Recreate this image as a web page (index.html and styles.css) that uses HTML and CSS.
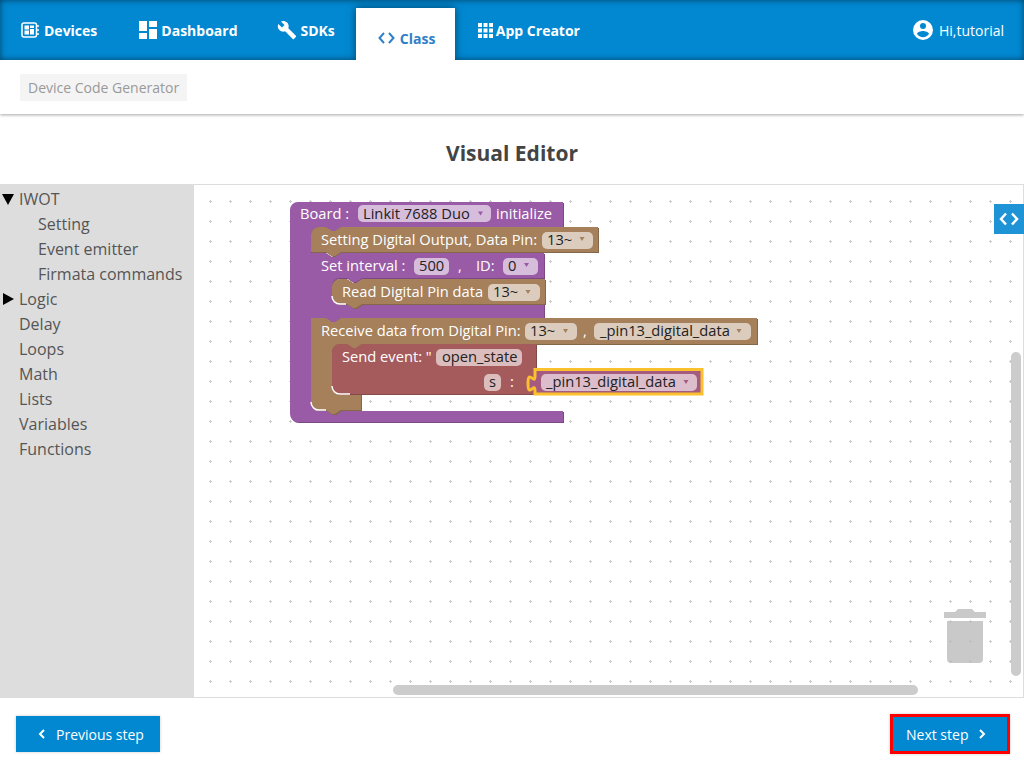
FILE: index.html
```html
<!DOCTYPE html>
<html>
	<head>
		<meta charset="UTF-8">
		<title>Visual Editor</title>
		<link rel="stylesheet" href="styles.css">
	</head>
	<body>
		<nav class="topnav">
			<a class="nav-item nav-devices" href="#">
				<svg class="nav-icon" width="18" height="18" viewBox="0 0 18 18">
					<rect x="1" y="2" width="14.500" height="14" rx="2" class="ic-line"/>
					<rect x="3.500" y="4.500" width="4.500" height="4" class="ic-fill"/>
					<rect x="3.500" y="9.500" width="4.500" height="4" class="ic-fill"/>
					<rect x="9" y="4.500" width="4" height="2.500" class="ic-fill"/>
					<rect x="9" y="8" width="4" height="5.500" class="ic-fill"/>
					<path d="M16,5h2M16,9h2M16,13h2" class="ic-line"/>
				</svg>
				Devices
			</a>
			<a class="nav-item nav-dashboard" href="#">
				<svg class="nav-icon" width="18" height="18" viewBox="0 0 18 18">
					<path d="M0,0H8V10H0ZM10,0H18V6H10ZM10,8H18V18H10ZM0,12H8V18H0Z" class="ic-fill"/>
				</svg>
				Dashboard
			</a>
			<a class="nav-item nav-sdks" href="#">
				<svg class="nav-icon" width="20" height="20" viewBox="0 0 24 24">
					<path d="M22.7,19L13.6,9.9C14.5,7.6 14,4.9 12.1,3C10.1,1 7.1,0.6 4.7,1.7L9,6L6,9L1.6,4.7C0.4,7.1 0.9,10.1 2.9,12.1C4.8,14 7.5,14.5 9.8,13.6L18.9,22.7C19.3,23.1 19.9,23.1 20.3,22.7L22.6,20.4C23.1,20 23.1,19.3 22.7,19Z" class="ic-fill"/>
				</svg>
				SDKs
			</a>
			<a class="nav-item nav-class" href="#">
				<svg class="nav-icon" width="17" height="12" viewBox="0 0 17 12">
					<path d="M6,1L1.500,6L6,11M11,1L15.500,6L11,11" class="ic-code"/>
				</svg>
				Class
			</a>
			<a class="nav-item nav-creator" href="#">
				<svg class="nav-icon" width="15" height="15" viewBox="0 0 15 15">
					<path d="M0,0h4v4h-4zM5.500,0h4v4h-4zM11,0h4v4h-4zM0,5.500h4v4h-4zM5.500,5.500h4v4h-4zM11,5.500h4v4h-4zM0,11h4v4h-4zM5.500,11h4v4h-4zM11,11h4v4h-4z" class="ic-fill"/>
				</svg>
				App Creator
			</a>
			<a class="nav-user" href="#">
				<svg class="nav-icon" width="24" height="24" viewBox="0 0 24 24">
					<path d="M12,19.2C9.5,19.2 7.29,17.92 6,16C6.03,14 10,12.9 12,12.9C14,12.9 17.97,14 18,16C16.71,17.92 14.5,19.2 12,19.2M12,5A3,3 0 0,1 15,8A3,3 0 0,1 12,11A3,3 0 0,1 9,8A3,3 0 0,1 12,5M12,2A10,10 0 0,0 2,12A10,10 0 0,0 12,22A10,10 0 0,0 22,12A10,10 0 0,0 12,2Z" class="ic-fill"/>
				</svg>
				Hi,tutorial
			</a>
		</nav>

		<div class="subbar">
			<span class="chip">Device Code Generator</span>
		</div>

		<h1 class="title">Visual Editor</h1>

		<div class="editor">
			<ul class="toolbox">
				<li class="cat"><i class="tri-down"></i>IWOT</li>
				<li class="sub">Setting</li>
				<li class="sub">Event emitter</li>
				<li class="sub">Firmata commands</li>
				<li class="cat"><i class="tri-right"></i>Logic</li>
				<li class="cat">Delay</li>
				<li class="cat">Loops</li>
				<li class="cat">Math</li>
				<li class="cat">Lists</li>
				<li class="cat">Variables</li>
				<li class="cat">Functions</li>
			</ul>
			<div class="workspace">
				<svg class="canvas" viewBox="194 185 829 512">
					<defs>
						<pattern id="dots" x="0" y="0" width="20" height="20" patternUnits="userSpaceOnUse">
							<rect x="9" y="1" width="3" height="1" fill="#ccc"/>
							<rect x="10" y="0" width="1" height="3" fill="#ccc"/>
						</pattern>
					</defs>
					<rect x="194" y="185" width="829" height="512" fill="url(#dots)"/>

					<!-- board -->
					<path class="dark-purple" transform="translate(1,1)" d="M290,210a8,8 0 0 1 8,-8H563V227H341l-6,4 -3,0 -6,-4H319a8,8 0 0 0 -8,8V403a8,8 0 0 0 8,8H563V422H298a8,8 0 0 1 -8,-8z"/>
					<path class="purple" d="M290,210a8,8 0 0 1 8,-8H563V227H341l-6,4 -3,0 -6,-4H319a8,8 0 0 0 -8,8V403a8,8 0 0 0 8,8H563V422H298a8,8 0 0 1 -8,-8z"/>
					<!-- setting digital output -->
					<path class="dark-brown" transform="translate(1,1)" d="M311,235a8,8 0 0 1 8,-8H326l6,4 3,0 6,-4H598V252H341l-6,4 -3,0 -6,-4H311z"/>
					<path class="brown" d="M311,235a8,8 0 0 1 8,-8H326l6,4 3,0 6,-4H598V252H341l-6,4 -3,0 -6,-4H311z"/>
					<!-- set interval -->
					<path class="dark-purple" transform="translate(1,1)" d="M311,253H326l6,4 3,0 6,-4H544V278H362l-6,4 -3,0 -6,-4H340a8,8 0 0 0 -8,8V296a8,8 0 0 0 8,8H544V318H341l-6,4 -3,0 -6,-4H311z"/>
					<path class="purple" d="M311,253H326l6,4 3,0 6,-4H544V278H362l-6,4 -3,0 -6,-4H340a8,8 0 0 0 -8,8V296a8,8 0 0 0 8,8H544V318H341l-6,4 -3,0 -6,-4H311z"/>
					<!-- read digital pin -->
					<path class="dark-brown" transform="translate(1,1)" d="M332,287a8,8 0 0 1 8,-8H347l6,4 3,0 6,-4H545V304H362l-6,4 -3,0 -6,-4H340a8,8 0 0 1 -8,-8z"/>
					<path class="brown" d="M332,287a8,8 0 0 1 8,-8H347l6,4 3,0 6,-4H545V304H362l-6,4 -3,0 -6,-4H340a8,8 0 0 1 -8,-8z"/>
					<path class="edge" d="M332,296a8,8 0 0 0 8,8H346"/>
					<!-- receive data -->
					<path class="dark-brown" transform="translate(1,1)" d="M311,318H326l6,4 3,0 6,-4H757V344H362l-6,4 -3,0 -6,-4H340a8,8 0 0 0 -8,8V386a8,8 0 0 0 8,8H361V410H341l-6,4 -3,0 -6,-4H319a8,8 0 0 1 -8,-8z"/>
					<path class="brown" d="M311,318H326l6,4 3,0 6,-4H757V344H362l-6,4 -3,0 -6,-4H340a8,8 0 0 0 -8,8V386a8,8 0 0 0 8,8H361V410H341l-6,4 -3,0 -6,-4H319a8,8 0 0 1 -8,-8z"/>
					<path class="edge" d="M311,402a8,8 0 0 0 8,8H326"/>
					<!-- send event -->
					<path class="dark-red" transform="translate(1,1)" d="M332,352a8,8 0 0 1 8,-8H347l6,4 3,0 6,-4H536V394H340a8,8 0 0 1 -8,-8z"/>
					<path class="red" d="M332,352a8,8 0 0 1 8,-8H347l6,4 3,0 6,-4H536V394H340a8,8 0 0 1 -8,-8z"/>
					<path class="edge" d="M332,386a8,8 0 0 0 8,8H350"/>
					<!-- selected value block -->
					<path class="rose" d="M535,369.500H702V394H535V391c0,-10 -7,8 -7,-7.500s7,2.500 7,-7.500z"/>

					<rect class="fd-purple" x="358" y="205" width="133" height="17" rx="5"/>
					<rect class="fd-brown" x="542" y="232" width="51" height="17" rx="5"/>
					<rect class="fd-purple" x="414" y="258" width="35" height="17" rx="5"/>
					<rect class="fd-purple" x="503" y="258" width="35" height="17" rx="5"/>
					<rect class="fd-brown" x="488" y="284" width="52" height="17" rx="5"/>
					<rect class="fd-brown" x="525" y="323" width="52" height="17" rx="5"/>
					<rect class="fd-brown" x="594" y="323" width="157" height="17" rx="5"/>
					<rect class="fd-red" x="436" y="349" width="86" height="17" rx="5"/>
					<rect class="fd-red" x="484" y="374" width="17" height="17" rx="5"/>
					<rect class="fd-rose" x="541" y="374" width="156" height="17" rx="5"/>

					<text class="lbl" x="300" y="219">Board :</text>
					<text class="val" x="363" y="219">Linkit 7688 Duo</text>
					<text class="lbl" x="496" y="219">initialize</text>
					<text class="lbl" x="321" y="245">Setting Digital Output, Data Pin:</text>
					<text class="val" x="547" y="245">13~</text>
					<text class="lbl" x="321" y="271">Set interval :</text>
					<text class="val" x="419" y="271">500</text>
					<text class="lbl" x="458" y="271">,</text>
					<text class="lbl" x="476" y="271">ID:</text>
					<text class="val" x="508" y="271">0</text>
					<text class="lbl" x="342" y="297">Read Digital Pin data</text>
					<text class="val" x="493" y="297">13~</text>
					<text class="lbl" x="321" y="336">Receive data from Digital Pin:</text>
					<text class="val" x="530" y="336">13~</text>
					<text class="lbl" x="583" y="336">,</text>
					<text class="val" x="600" y="336">_pin13_digital_data</text>
					<text class="lbl" x="342" y="362">Send event: "</text>
					<text class="val" x="442" y="362">open_state</text>
					<text class="val" x="489" y="387">s</text>
					<text class="lbl" x="510" y="387">:</text>
					<text class="val" x="546" y="387">_pin13_digital_data</text>

					<path class="arr-purple" d="M478,211.500h5l-2.500,4z"/>
					<path class="arr-brown" d="M579.500,237h5l-2.500,4z"/>
					<path class="arr-purple" d="M524,263h5l-2.500,4z"/>
					<path class="arr-brown" d="M525.500,290h5l-2.500,4z"/>
					<path class="arr-brown" d="M563,329h5l-2.500,4z"/>
					<path class="arr-brown" d="M736.500,329h5l-2.500,4z"/>
					<path class="arr-rose" d="M683.500,380h5l-2.500,4z"/>

					<!-- trash -->
					<path class="trash" d="M944,612H955L958,609H972L975,612H986V618H944ZM947,621H983V659a4,4 0 0 1 -4,4H951a4,4 0 0 1 -4,-4z"/>
					<!-- scrollbars -->
					<rect class="scroll" x="1011" y="352" width="10" height="324" rx="5"/>
					<rect class="scroll" x="393" y="685" width="525" height="10" rx="5"/>
				</svg>
				<div class="code-toggle">
					<svg width="20" height="14" viewBox="0 0 20 14">
						<path d="M7,1.500L2,7L7,12.500M13,1.500L18,7L13,12.500" class="ic-toggle"/>
					</svg>
				</div>
			</div>
		</div>

		<div class="steps">
			<a class="btn btn-prev" href="#">
				<svg width="8" height="10" viewBox="0 0 8 10"><path d="M6,1L2,5L6,9" class="ic-chev"/></svg>
				Previous step
			</a>
			<a class="btn btn-next" href="#">
				Next step
				<svg width="8" height="10" viewBox="0 0 8 10"><path d="M2,1L6,5L2,9" class="ic-chev"/></svg>
			</a>
		</div>
	</body>
</html>
```

FILE: styles.css
```css
* {
	margin: 0;
	padding: 0;
	box-sizing: border-box;
}
html, body {
	height: 768px;
	overflow: hidden;
}
body {
	font-family: "Open Sans", "Liberation Sans", sans-serif;
	background-color: white;
	color: #444;
}
a {
	text-decoration: none;
}

/* top navigation */
.topnav {
	display: flex;
	align-items: stretch;
	height: 60px;
	background-color: #0288d1;
	box-shadow: inset 0 0 6px rgba(0, 0, 0, 0.55);
	overflow: hidden;
	position: relative;
	z-index: 2;
}
.nav-item {
	display: flex;
	flex: none;
	align-items: center;
	gap: 5px;
	padding: 0 20px;
	color: white;
	font-size: 14px;
	font-weight: 700;
}
.nav-devices {
	padding-left: 21px;
}
.nav-dashboard {
	padding-left: 22px;
	gap: 4px;
}
.nav-sdks {
	padding: 0 21px 0 19px;
	gap: 4px;
}
.nav-class {
	width: 99px;
	margin-top: 8px;
	padding: 8px 0 0 22px;
	background-color: white;
	color: #2f80c8;
	box-shadow: 0 0 8px rgba(0, 0, 0, 0.5);
}
.nav-creator {
	padding-left: 23px;
	gap: 3px;
}
.nav-user {
	display: flex;
	align-items: center;
	gap: 4px;
	margin-left: auto;
	padding: 0 20px 0 0;
	color: white;
	font-size: 14px;
}
.ic-fill {
	fill: white;
}
.ic-line {
	fill: none;
	stroke: white;
	stroke-width: 1.5;
}
.ic-code {
	fill: none;
	stroke: #2f80c8;
	stroke-width: 2;
}

/* sub bar */
.subbar {
	height: 54px;
	padding: 14px 20px 0;
	background-color: white;
	box-shadow: 0 1px 3px rgba(0, 0, 0, 0.35);
}
.chip {
	display: inline-block;
	height: 27px;
	padding: 0 8px;
	background-color: #f4f4f4;
	color: #999;
	font-size: 14px;
	line-height: 27px;
}

.title {
	height: 70px;
	padding-top: 25px;
	font-size: 21px;
	font-weight: 700;
	line-height: 28px;
	text-align: center;
	color: #444;
}

/* editor */
.editor {
	display: flex;
	height: 514px;
	border-top: 1px solid #ddd;
	border-right: 1px solid #ddd;
	border-bottom: 1px solid #ddd;
}
.toolbox {
	width: 194px;
	padding-top: 2px;
	background-color: #ddd;
	list-style: none;
	font-size: 16px;
	line-height: 25px;
	color: #555;
}
.toolbox li {
	height: 25px;
	position: relative;
	white-space: nowrap;
}
.cat {
	padding-left: 19px;
}
.sub {
	padding-left: 38px;
}
.tri-down {
	position: absolute;
	left: 2px;
	top: 7px;
	border-left: 6.5px solid transparent;
	border-right: 6.5px solid transparent;
	border-top: 11px solid black;
}
.tri-right {
	position: absolute;
	left: 3px;
	top: 6px;
	border-top: 6px solid transparent;
	border-bottom: 6px solid transparent;
	border-left: 11px solid black;
}
.workspace {
	flex: 1;
	position: relative;
	background-color: white;
}
.canvas {
	display: block;
	width: 829px;
	height: 512px;
}

/* blocks */
.purple { fill: #995ba5; }
.brown { fill: #a5805b; }
.red { fill: #a55b5b; }
.dark-purple { fill: #7a4984; }
.dark-brown { fill: #846649; }
.dark-red { fill: #844949; }
.rose {
	fill: #a55b80;
	stroke: #fbc02d;
	stroke-width: 3;
}
.edge {
	fill: none;
	stroke: white;
	stroke-width: 1.5;
}
.fd-purple { fill: #d6bddb; }
.fd-brown { fill: #dbccbd; }
.fd-red { fill: #dbbdbd; }
.fd-rose { fill: #dbbdcc; }
.lbl, .val {
	font-family: "Open Sans", "Liberation Sans", sans-serif;
	font-size: 14.7px;
}
.lbl { fill: white; }
.val { fill: #222; }
.arr-purple { fill: #995ba5; }
.arr-brown { fill: #a5805b; }
.arr-rose { fill: #a55b80; }
.trash {
	fill: #bbb;
	opacity: 0.8;
}
.scroll {
	fill: #ccc;
}

.code-toggle {
	position: absolute;
	top: 19px;
	right: -1px;
	display: flex;
	align-items: center;
	justify-content: center;
	width: 30px;
	height: 30px;
	background-color: #1e93d6;
}
.ic-toggle {
	fill: none;
	stroke: white;
	stroke-width: 2.5;
}

/* bottom buttons */
.steps {
	display: flex;
	justify-content: space-between;
	align-items: center;
	height: 70px;
	padding: 2px 14px 0 16px;
}
.btn {
	display: flex;
	align-items: center;
	height: 36px;
	background-color: #0288d1;
	color: white;
	font-size: 14px;
	box-shadow: 0 0 3px rgba(0, 0, 0, 0.2);
}
.btn-prev {
	width: 144px;
	padding-left: 22px;
	gap: 10px;
}
.btn-next {
	width: 120px;
	height: 40px;
	padding-left: 13px;
	gap: 10px;
	border: 3px solid #f00;
}
.ic-chev {
	fill: none;
	stroke: white;
	stroke-width: 2;
}
```
